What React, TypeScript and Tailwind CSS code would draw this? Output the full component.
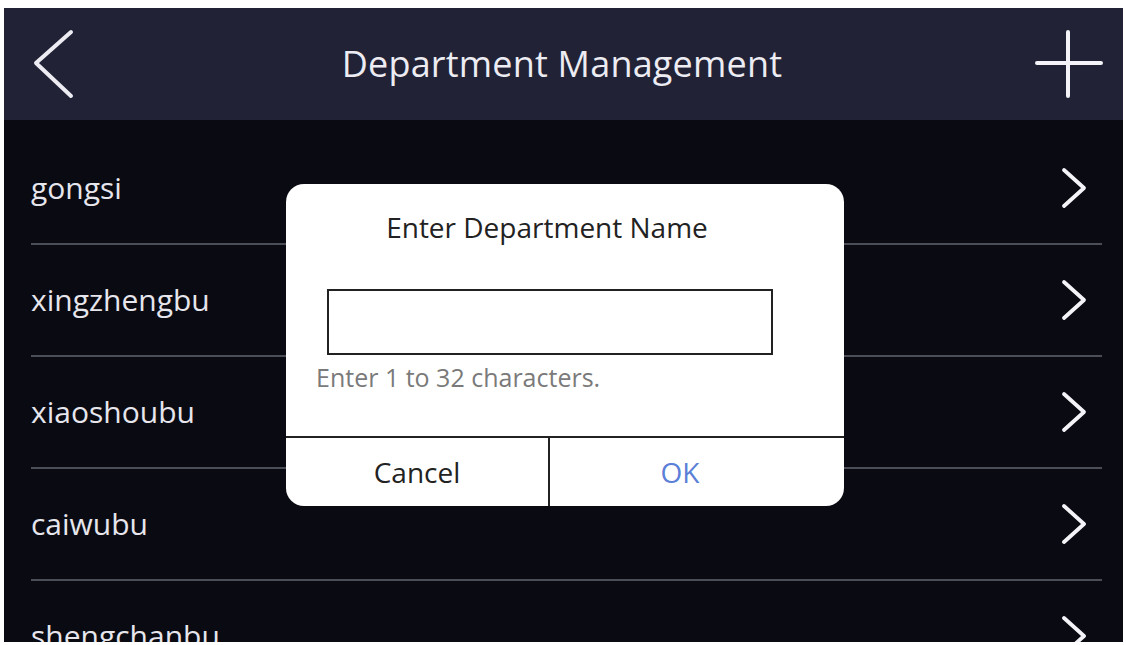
const departments = ["gongsi", "xingzhengbu", "xiaoshoubu", "caiwubu", "shengchanbu"];

function BackIcon() {
  return (
    <svg width="44" height="72" viewBox="0 0 44 72" fill="none">
      <polyline
        points="38,4 3,35 38,68"
        stroke="#ececf2"
        strokeWidth="4"
        strokeLinecap="round"
        strokeLinejoin="round"
      />
    </svg>
  );
}

function PlusIcon() {
  return (
    <svg width="68" height="68" viewBox="0 0 68 68" fill="none">
      <path d="M33 2v64M2 33h64" stroke="#f4f4f8" strokeWidth="4" strokeLinecap="round" />
    </svg>
  );
}

function ChevronRight() {
  return (
    <svg width="28" height="42" viewBox="0 0 28 42" fill="none">
      <polyline
        points="4,3 24,21 4,39"
        stroke="#f4f4f8"
        strokeWidth="3.8"
        strokeLinecap="round"
        strokeLinejoin="round"
      />
    </svg>
  );
}

export default function App() {
  return (
    <div
      className="w-[1126px] h-[645px] bg-white pt-[8px] pl-[4px] pr-[3px] pb-[3px]"
      style={{ fontFamily: '"Open Sans", "Noto Sans", sans-serif' }}
    >
      <div className="relative w-full h-full bg-[#0a0a13] overflow-hidden flex flex-col">
        {/* Title bar */}
        <div className="h-[112px] shrink-0 bg-[#212236] flex items-center justify-between pl-[29px] pr-[20px]">
          <BackIcon />
          <span className="ml-[12px] text-[36px] text-[#ececf2] tracking-[0.2px]">Department Management</span>
          <PlusIcon />
        </div>

        {/* Department list */}
        <div className="pt-[13px] pl-[27px] pr-[21px]">
          {departments.map((name) => (
            <div key={name} className="h-[112px] flex flex-col">
              <div className="h-[110px] flex items-center justify-between pr-[14px]">
                <span className="text-[30px] text-[#e6e6ec] leading-[40px]">{name}</span>
                <ChevronRight />
              </div>
              <div className="h-[2px] bg-[#4b4d57]" />
            </div>
          ))}
        </div>

        {/* Name prompt */}
        <div className="absolute left-[282px] top-[176px] w-[558px] h-[322px] bg-white rounded-[18px] flex flex-col">
          <div className="flex-1 pl-[41px] pr-[71px] pt-[23px]">
            <div className="-ml-[6px] text-center text-[28px] text-[#222] leading-[40px]">Enter Department Name</div>
            <div className="mt-[42px] h-[66px] border-2 border-[#222] bg-white" />
            <div className="mt-[5px] -ml-[11px] text-[25px] text-[#7a7a7a] leading-[34px]">
              Enter 1 to 32 characters.
            </div>
          </div>
          <div className="h-[70px] border-t-2 border-[#222] flex">
            <div className="w-[264px] border-r-2 border-[#222] flex items-center justify-center text-[28px] text-[#222]">
              Cancel
            </div>
            <div className="flex-1 flex items-center justify-center pr-[34px] text-[28px] text-[#5b80d8]">OK</div>
          </div>
        </div>
      </div>
    </div>
  );
}
